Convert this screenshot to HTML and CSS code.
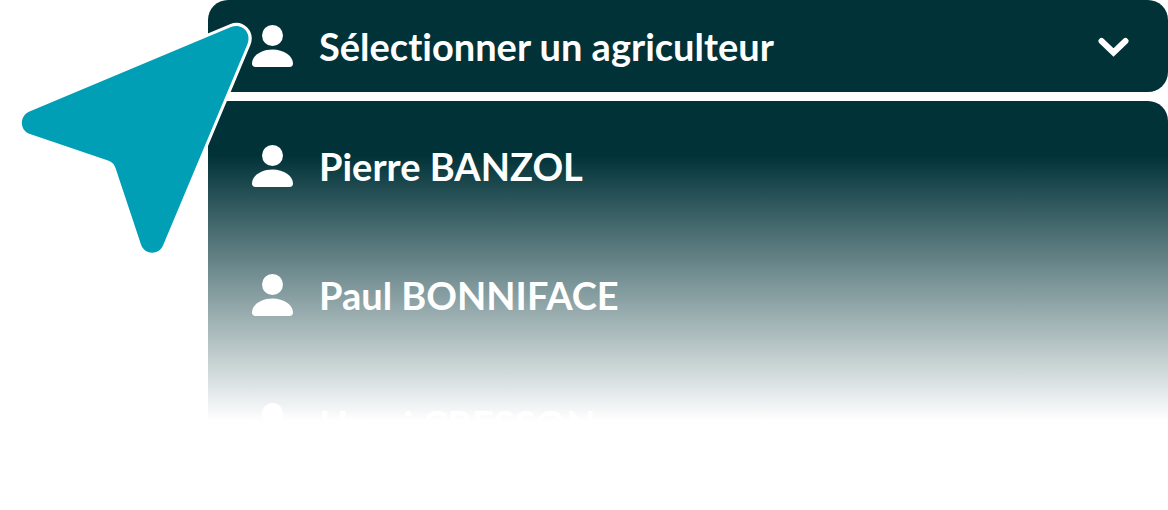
FILE: index.html
```html
<!DOCTYPE html>
<html lang="fr">
<head>
<meta charset="utf-8">
<meta name="viewport" content="width=device-width, initial-scale=1">
<title>Sélectionner un agriculteur</title>
<link rel="stylesheet" href="styles.css">
</head>
<body>
<svg class="symbols" aria-hidden="true">
  <symbol id="person" viewBox="0 0 42 42">
    <circle cx="21.500" cy="10.500" r="10.500"/>
    <path d="M21.500 24.500C33 24.500 42 31 42 38.500C42 40.800 40.800 42 38.500 42H4.500C2.200 42 1 40.800 1 38.500C1 31 10 24.500 21.500 24.500Z"/>
  </symbol>
</svg>
<main class="picker">
  <button class="trigger" type="button" aria-expanded="true" aria-controls="farmers">
    <svg class="person" aria-hidden="true"><use href="#person"/></svg>
    <span class="label">Sélectionner un agriculteur</span>
    <svg class="chevron" viewBox="0 0 32 24" aria-hidden="true"><path d="M4.500 7L16.500 18.500L28.500 7"/></svg>
  </button>
  <ul class="options" id="farmers">
    <li><button class="option" type="button"><svg class="person" aria-hidden="true"><use href="#person"/></svg><span class="label">Pierre BANZOL</span></button></li>
    <li><button class="option" type="button"><svg class="person" aria-hidden="true"><use href="#person"/></svg><span class="label">Paul BONNIFACE</span></button></li>
    <li><button class="option" type="button"><svg class="person" aria-hidden="true"><use href="#person"/></svg><span class="label">Henri CRESSON</span></button></li>
  </ul>
  <svg class="cursor" viewBox="0 0 260 260" aria-hidden="true">
    <path d="M29.500 111.500L231 27C242 22.500 252 33 247.500 44L163 245.500C158.500 255.500 144.500 255 141 244.500L115.500 168C114 164 112 162 108 160.500L30 134C19.500 130.500 19 116 29.500 111.500Z"/>
  </svg>
</main>
</body>
</html>
```
FILE: styles.css
```css
* {
  box-sizing: border-box;
}

body {
  margin: 0;
  background: #fff;
  font-family: Lato, "Open Sans", sans-serif;
}

.symbols {
  position: absolute;
  width: 0;
  height: 0;
}

.picker {
  position: relative;
  display: flex;
  flex-direction: column;
  gap: 9px;
  padding-left: 208px;
}

.trigger,
.option {
  display: flex;
  align-items: center;
  gap: 26px;
  width: 100%;
  border: 0;
  color: #fff;
  font: inherit;
  font-size: 38px;
  font-weight: 700;
  font-variant-ligatures: none;
  line-height: 48px;
  text-align: left;
}

.trigger {
  padding: 22px 39px 22px 43px;
  border-radius: 20px;
  background: #003238;
}

.option {
  padding: 41px 43px 40px;
  background: transparent;
}

.options {
  margin: 0;
  padding: 0;
  list-style: none;
  border-radius: 20px 20px 0 0;
  background: linear-gradient(#003238 54px, #fff 320px);
}

.label {
  flex: 1;
}

.person {
  flex: none;
  width: 42px;
  height: 42px;
  fill: #fff;
}

.chevron {
  flex: none;
  width: 32px;
  height: 24px;
  fill: none;
  stroke: #fff;
  stroke-width: 6px;
  stroke-linecap: round;
}

.cursor {
  position: absolute;
  top: 0;
  left: 0;
  width: 260px;
  height: 260px;
  fill: #009fb5;
  stroke: #fff;
  stroke-width: 6px;
  paint-order: stroke;
}
```
